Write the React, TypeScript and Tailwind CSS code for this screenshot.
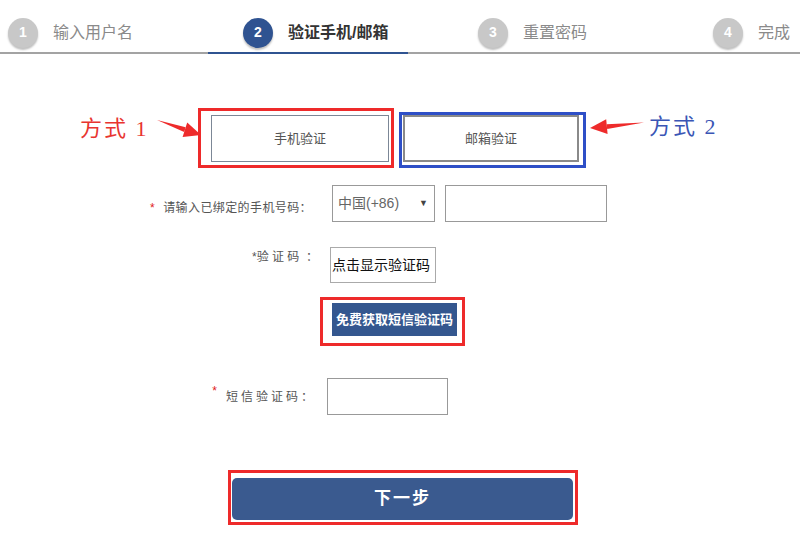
import React from 'react';

const cjk = "font-['Arial','Liberation_Sans','Noto_Sans_CJK_SC',sans-serif]";

interface Step {
  no: number;
  label: string;
  active?: boolean;
}

const steps: Step[] = [
  { no: 1, label: '输入用户名' },
  { no: 2, label: '验证手机/邮箱', active: true },
  { no: 3, label: '重置密码' },
  { no: 4, label: '完成' },
];

const StepBar: React.FC = () => (
  <div>
    <div className="flex h-[52px] items-center pt-[13px] pl-[8px]">
      {steps.map((s) => (
        <div key={s.no} className="flex w-[235px] shrink-0 items-center">
          <span
            className={`flex h-[30px] w-[30px] items-center justify-center rounded-full text-[14px] font-bold text-white shadow-[0_2px_2px_rgba(0,0,0,0.25)] ${
              s.active ? 'bg-[#2f5391]' : 'bg-[#c8c8c8]'
            }`}
          >
            {s.no}
          </span>
          <span
            className={`ml-[15px] text-[16px] ${
              s.active ? 'font-bold text-[#333]' : 'text-[#8a8a8a]'
            }`}
          >
            {s.label}
          </span>
        </div>
      ))}
    </div>
    {/* underline */}
    <div className="flex h-[2px]">
      <div className="w-[208px] bg-[#a3a3a3]" />
      <div className="w-[200px] bg-[#2f5391]" />
      <div className="flex-1 bg-[#a3a3a3]" />
    </div>
  </div>
);

const ArrowRight: React.FC = () => (
  <svg width="48" height="40" className="shrink-0 overflow-visible">
    <polygon points="7,12 35.6,19.3 34.2,24.1" fill="#ee2b2b" />
    <polygon points="51,27 37.2,14.6 32.6,29" fill="#ee2b2b" />
  </svg>
);

const ArrowLeft: React.FC = () => (
  <svg width="63" height="40" className="shrink-0 overflow-visible">
    <polygon points="58,14.5 20.6,16.2 21.2,21" fill="#ee2b2b" />
    <polygon points="4,20 20.2,11.2 21.6,26" fill="#ee2b2b" />
  </svg>
);

const App: React.FC = () => {
  return (
    <div className={`h-[536px] w-[800px] overflow-hidden bg-white ${cjk}`}>
      <StepBar />

      {/* verification modes */}
      <div className="mt-[54px] flex items-start pl-[80px]">
        <span className="mt-[4px] w-[70px] shrink-0 whitespace-nowrap font-['Liberation_Serif','Noto_Sans_CJK_SC',serif] text-[22px] tracking-[2px] text-[#e8342f]">
          方式 1
        </span>
        <ArrowRight />
        <div className="border-[3px] border-[#ee2a2a] pt-[4px] pr-[2px] pb-[3px] pl-[10px]">
          <button className="flex h-[47px] w-[178px] items-center justify-center border border-[#7c8796] bg-white text-[13px] text-[#555]">
            手机验证
          </button>
        </div>
        <div className="ml-[5px] mt-[4px] border-[3px] border-[#2e4fc7] pt-0 pr-[4px] pb-[3px] pl-[1px]">
          <button className="flex h-[47px] w-[176px] items-center justify-center border-2 border-[#8a8a8a] bg-white text-[13px] text-[#555]">
            邮箱验证
          </button>
        </div>
        <ArrowLeft />
        <span className="mt-[2px] shrink-0 whitespace-nowrap font-['Liberation_Serif','Noto_Sans_CJK_SC',serif] text-[22px] tracking-[2px] text-[#3a55b5]">
          方式 2
        </span>
      </div>

      {/* phone */}
      <div className="mt-[17px] flex items-center">
        <div className="w-[312px] shrink-0 pt-[8px] text-right text-[12px] tracking-[0.4px] text-[#555]">
          <span className="mr-[8px] text-[#e02020]">*</span>请输入已绑定的手机号码：
        </div>
        <div className="ml-[20px] flex h-[37px] w-[103px] items-center justify-between border border-[#999] pr-[6px] pl-[5px] text-[14px] text-[#666]">
          <span>中国(+86)</span>
          <span className="text-[9px] text-[#444]">▼</span>
        </div>
        <div className="ml-[10px] h-[37px] w-[162px] border border-[#999]" />
      </div>

      {/* captcha */}
      <div className="mt-[25px] flex items-start">
        <div className="w-[318px] shrink-0 pt-[1px] text-right text-[12px] text-[#555]">
          *验&nbsp;证&nbsp;码&nbsp;&nbsp;：
        </div>
        <div className="ml-[12px] flex h-[36px] w-[106px] items-center border border-[#aaa] pl-[1px] text-[14px] text-[#111]">
          点击显示验证码
        </div>
      </div>

      {/* sms button */}
      <div className="mt-[14px] flex pl-[320px]">
        <div className="border-[3px] border-[#ee2a2a] pt-[3px] pr-[5px] pb-[7px] pl-[9px]">
          <button className="flex h-[33px] w-[125px] items-center justify-center bg-[#34578f] text-[13px] font-bold text-white">
            免费获取短信验证码
          </button>
        </div>
      </div>

      {/* sms code */}
      <div className="mt-[32px] flex items-center">
        <div className="w-[316px] shrink-0 text-right text-[12px] tracking-[3px] text-[#555]">
          <span className="relative top-[-6px] mr-[6px] text-[#e02020]">*</span>短信验证码：
        </div>
        <div className="ml-[11px] h-[37px] w-[121px] border border-[#999]" />
      </div>

      {/* next */}
      <div className="mt-[55px] flex pl-[228px]">
        <div className="border-[3px] border-[#ee2a2a] pt-[5px] pr-[2px] pb-[2px] pl-[1px]">
          <button className="flex h-[42px] w-[341px] items-center justify-center rounded-[5px] bg-[#3a5a8f] text-[17px] font-bold tracking-[2px] text-white">
            下一步
          </button>
        </div>
      </div>
    </div>
  );
};

export default App;
